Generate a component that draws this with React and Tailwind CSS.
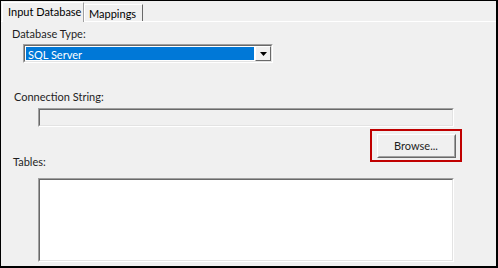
export default function App() {
  const font = { fontFamily: 'Lato, "Noto Sans", sans-serif' };
  return (
    <div
      className="w-[498px] h-[268px] border-l border-t border-r-2 border-b-2 border-black bg-[#f0f0f0] flex flex-col text-[11px] leading-[16px] text-[#000] overflow-hidden"
      style={font}
    >
      {/* tabs */}
      <div className="flex items-end h-[20px] pl-[1px]">
        <div className="w-[82px] h-[20px] border-l border-t border-white border-r border-r-[#a0a0a0] bg-[#f0f0f0] pl-[5px] pt-[1px] relative z-10 -mb-[1px] whitespace-nowrap">
          Input Database
        </div>
        <div className="w-[59px] h-[17px] border-l border-t border-white border-r border-r-[#696969] pl-[4px] leading-[15px] pt-[1px] whitespace-nowrap">
          Mappings
        </div>
      </div>
      {/* panel */}
      <div className="flex-1 border-t border-white flex flex-col">
        <div className="pl-[11px] pt-[4px] text-[#1e1e1e] whitespace-nowrap">Database Type:</div>
        {/* combobox */}
        <div className="ml-[22px] mt-[2px] w-[250px] h-[19px] flex border border-t-[#a0a0a0] border-l-[#a0a0a0] border-b-white border-r-white">
          <div className="flex-1 flex border border-t-[#696969] border-l-[#696969] border-b-[#e3e3e3] border-r-[#e3e3e3] bg-white">
            <div className="flex-1 bg-[#0078d7] text-white pl-[2px] leading-[15px] m-[1px] whitespace-nowrap">SQL Server</div>
            <div className="w-[16px] flex items-center justify-center bg-[#f0f0f0] border border-t-white border-l-white border-b-[#696969] border-r-[#696969]">
              <svg width="7" height="4" viewBox="0 0 7 4">
                <path d="M0 0H7L3.5 4Z" fill="#000" />
              </svg>
            </div>
          </div>
        </div>
        <div className="pl-[13px] mt-[26px] text-[#1e1e1e] whitespace-nowrap">Connection String:</div>
        {/* connection string textbox */}
        <div className="ml-[37px] mt-[3px] w-[416px] h-[19px] flex border border-t-[#a0a0a0] border-l-[#a0a0a0] border-b-white border-r-white">
          <div className="flex-1 border border-t-[#696969] border-l-[#696969] border-b-[#e3e3e3] border-r-[#e3e3e3] bg-[#f0f0f0]" />
        </div>
        {/* tables label + browse */}
        <div className="flex items-end justify-between mt-[2px] h-[33px]">
          <div className="pl-[12px] mb-[-8px] text-[#1e1e1e]">Tables:</div>
          <div className="mr-[34px] w-[92px] h-[33px] border-2 border-[#c00000] flex items-center justify-center">
            <div className="w-[79px] h-[24px] flex border border-t-white border-l-white border-b-[#696969] border-r-[#696969] bg-[#f0f0f0]">
              <div className="flex-1 flex items-center justify-center border border-transparent border-b-[#a0a0a0] border-r-[#a0a0a0] text-[#1e1e1e]">
                Browse...
              </div>
            </div>
          </div>
        </div>
        {/* tables box */}
        <div className="ml-[37px] mt-[16px] w-[416px] h-[84px] flex border border-t-[#a0a0a0] border-l-[#a0a0a0] border-b-white border-r-white">
          <div className="flex-1 border border-t-[#696969] border-l-[#696969] border-b-[#e3e3e3] border-r-[#e3e3e3] bg-white" />
        </div>
      </div>
    </div>
  );
}
